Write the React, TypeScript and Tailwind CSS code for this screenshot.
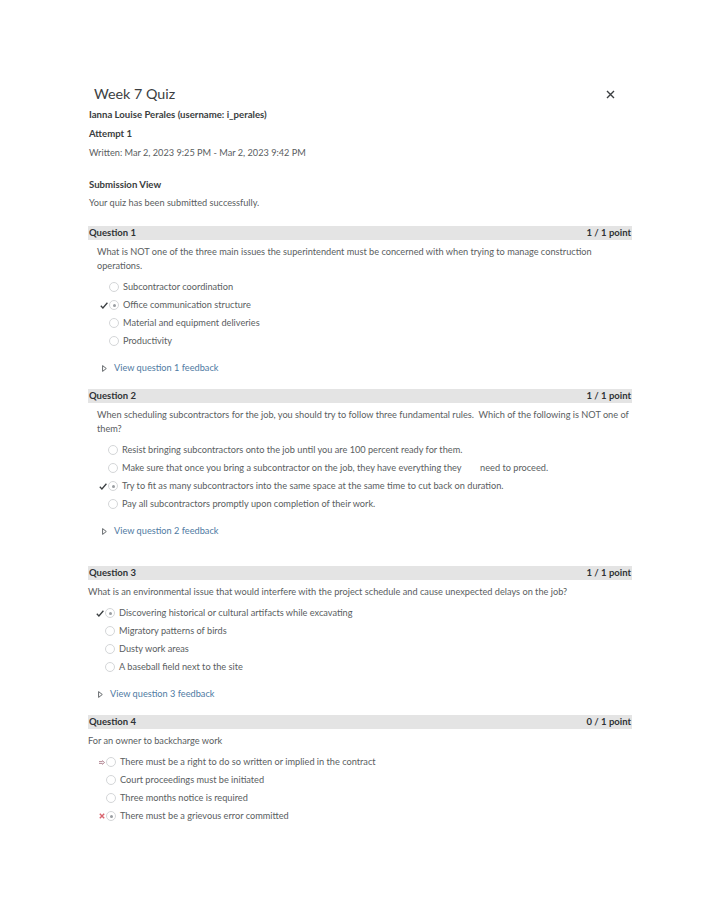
import React from 'react';

type Mark = 'check' | 'wrong' | 'arrow' | null;

interface Option {
  text: string;
  selected?: boolean;
  mark?: Mark;
}

interface Question {
  n: number;
  score: string;
  prompt: string[];
  options: Option[];
  feedback?: boolean;
}

const questions: Question[] = [
  {
    n: 1,
    score: '1 / 1 point',
    prompt: [
      'What is NOT one of the three main issues the superintendent must be concerned with when trying to manage construction',
      'operations.',
    ],
    options: [
      { text: 'Subcontractor coordination' },
      { text: 'Office communication structure', selected: true, mark: 'check' },
      { text: 'Material and equipment deliveries' },
      { text: 'Productivity' },
    ],
    feedback: true,
  },
  {
    n: 2,
    score: '1 / 1 point',
    prompt: [
      'When scheduling subcontractors for the job, you should try to follow three fundamental rules.  Which of the following is NOT one of',
      'them?',
    ],
    options: [
      { text: 'Resist bringing subcontractors onto the job until you are 100 percent ready for them.' },
      { text: 'Make sure that once you bring a subcontractor on the job, they have everything they \u00a0\u00a0\u00a0\u00a0\u00a0\u00a0\u00a0need to proceed.' },
      { text: 'Try to fit as many subcontractors into the same space at the same time to cut back on duration.', selected: true, mark: 'check' },
      { text: 'Pay all subcontractors promptly upon completion of their work.' },
    ],
    feedback: true,
  },
  {
    n: 3,
    score: '1 / 1 point',
    prompt: ['What is an environmental issue that would interfere with the project schedule and cause unexpected delays on the job?'],
    options: [
      { text: 'Discovering historical or cultural artifacts while excavating', selected: true, mark: 'check' },
      { text: 'Migratory patterns of birds' },
      { text: 'Dusty work areas' },
      { text: 'A baseball field next to the site' },
    ],
    feedback: true,
  },
  {
    n: 4,
    score: '0 / 1 point',
    prompt: ['For an owner to backcharge work'],
    options: [
      { text: 'There must be a right to do so written or implied in the contract', mark: 'arrow' },
      { text: 'Court proceedings must be initiated' },
      { text: 'Three months notice is required' },
      { text: 'There must be a grievous error committed', selected: true, mark: 'wrong' },
    ],
  },
];

const MarkIcon = ({ mark }: { mark: Mark }) => {
  if (mark === 'check')
    return (
      <svg className="w-[8px] h-[7px]" viewBox="0 0 8 7">
        <path d="M0.8 3.8 L2.9 6 L7.4 0.8" fill="none" stroke="#3b3f42" strokeWidth="1.3" />
      </svg>
    );
  if (mark === 'wrong')
    return (
      <svg className="w-[6px] h-[6px]" viewBox="0 0 6 6">
        <path d="M0.8 0.8 L5.2 5.2 M5.2 0.8 L0.8 5.2" fill="none" stroke="#d9646e" strokeWidth="1.4" />
      </svg>
    );
  if (mark === 'arrow')
    return (
      <svg className="w-[6px] h-[5px]" viewBox="0 0 6 5">
        <path d="M0 1.6 H3.5 M0 3.4 H3.5 M3 0.5 L5.6 2.5 L3 4.5" fill="none" stroke="#b58a97" strokeWidth="1" />
      </svg>
    );
  return null;
};

const Radio = ({ selected }: { selected?: boolean }) => (
  <span className="w-[10px] h-[10px] rounded-full border border-[#d4d6d8] bg-white flex items-center justify-center shrink-0">
    {selected && <span className="w-[3px] h-[3px] rounded-full bg-[#9a9ea2]" />}
  </span>
);

const indents: Record<number, { q: string; opt: string; fb: string }> = {
  1: { q: 'pl-[9px]', opt: 'pl-[11px]', fb: 'pl-[14px]' },
  2: { q: 'pl-[9px]', opt: 'pl-[10px]', fb: 'pl-[14px]' },
  3: { q: 'pl-[0px]', opt: 'pl-[7px]', fb: 'pl-[10px]' },
  4: { q: 'pl-[0px]', opt: 'pl-[8px]', fb: 'pl-[10px]' },
};

const QuestionBlock = ({ q }: { q: Question }) => {
  const ind = indents[q.n];
  return (
    <div className="flex flex-col">
      <div className="h-[14px] bg-[#e4e4e4] flex items-center justify-between px-[1px] text-[9.5px] font-bold text-[#2f3235]">
        <span>Question {q.n}</span>
        <span>{q.score}</span>
      </div>
      <div className={`${ind.q} pt-[5px] text-[9.2px] leading-[14px] text-[#5a5e61]`}>
        {q.prompt.map((l, i) => (
          <div key={i} className="whitespace-pre">{l}</div>
        ))}
      </div>
      <div className={`${ind.opt} pt-[5px] flex flex-col`}>
        {q.options.map((o, i) => (
          <div key={i} className="h-[18px] flex items-center text-[9.2px] text-[#5a5e61]">
            <span className="w-[10px] flex items-center justify-end pr-[1px]">
              <MarkIcon mark={o.mark ?? null} />
            </span>
            <Radio selected={o.selected} />
            <span className="ml-[4px] whitespace-nowrap">{o.text}</span>
          </div>
        ))}
      </div>
      {q.feedback && (
        <div className={`${ind.fb} pt-[9px] h-[27px] flex items-center text-[9.2px] text-[#4f7ba3]`}>
          <svg className="w-[5px] h-[7px] mr-[7px]" viewBox="0 0 5 7">
            <path d="M0.6 0.6 L4.3 3.5 L0.6 6.4 Z" fill="none" stroke="#55595c" strokeWidth="0.9" />
          </svg>
          <span>View question {q.n} feedback</span>
        </div>
      )}
    </div>
  );
};

export default function App() {
  return (
    <div className="min-h-[918px] w-[714px] bg-white" style={{ fontFamily: 'Lato, "Noto Sans", sans-serif' }}>
      <div className="ml-[88px] w-[544px] pt-[84px] pb-[80px]">
        <div className="h-[20px] flex items-center justify-between">
          <span className="pl-[6px] text-[14.3px] text-[#3b3e41]">Week 7 Quiz</span>
          <svg className="w-[9px] h-[9px] mr-[17px]" viewBox="0 0 9 9">
            <path d="M1 1 L8 8 M8 1 L1 8" fill="none" stroke="#3b3e41" strokeWidth="1.4" />
          </svg>
        </div>
        <div className="mt-[4px] text-[9.6px] leading-[14px] font-bold text-[#3a3d40] pl-[1px]">
          Ianna Louise Perales (username: i_perales)
        </div>
        <div className="mt-[5px] text-[9.6px] leading-[14px] font-bold text-[#3a3d40] pl-[1px]">Attempt 1</div>
        <div className="mt-[5px] text-[9.2px] leading-[14px] text-[#5a5e61] pl-[1px]">
          Written: Mar 2, 2023 9:25 PM - Mar 2, 2023 9:42 PM
        </div>
        <div className="mt-[18px] text-[9.6px] leading-[14px] font-bold text-[#3a3d40] pl-[1px]">Submission View</div>
        <div className="mt-[4px] text-[9.2px] leading-[14px] text-[#5a5e61] pl-[1px]">
          Your quiz has been submitted successfully.
        </div>
        <div className="mt-[16px] flex flex-col">
          <QuestionBlock q={questions[0]} />
          <div className="h-[12px]" />
          <QuestionBlock q={questions[1]} />
          <div className="h-[26px]" />
          <QuestionBlock q={questions[2]} />
          <div className="h-[12px]" />
          <QuestionBlock q={questions[3]} />
        </div>
      </div>
    </div>
  );
}
